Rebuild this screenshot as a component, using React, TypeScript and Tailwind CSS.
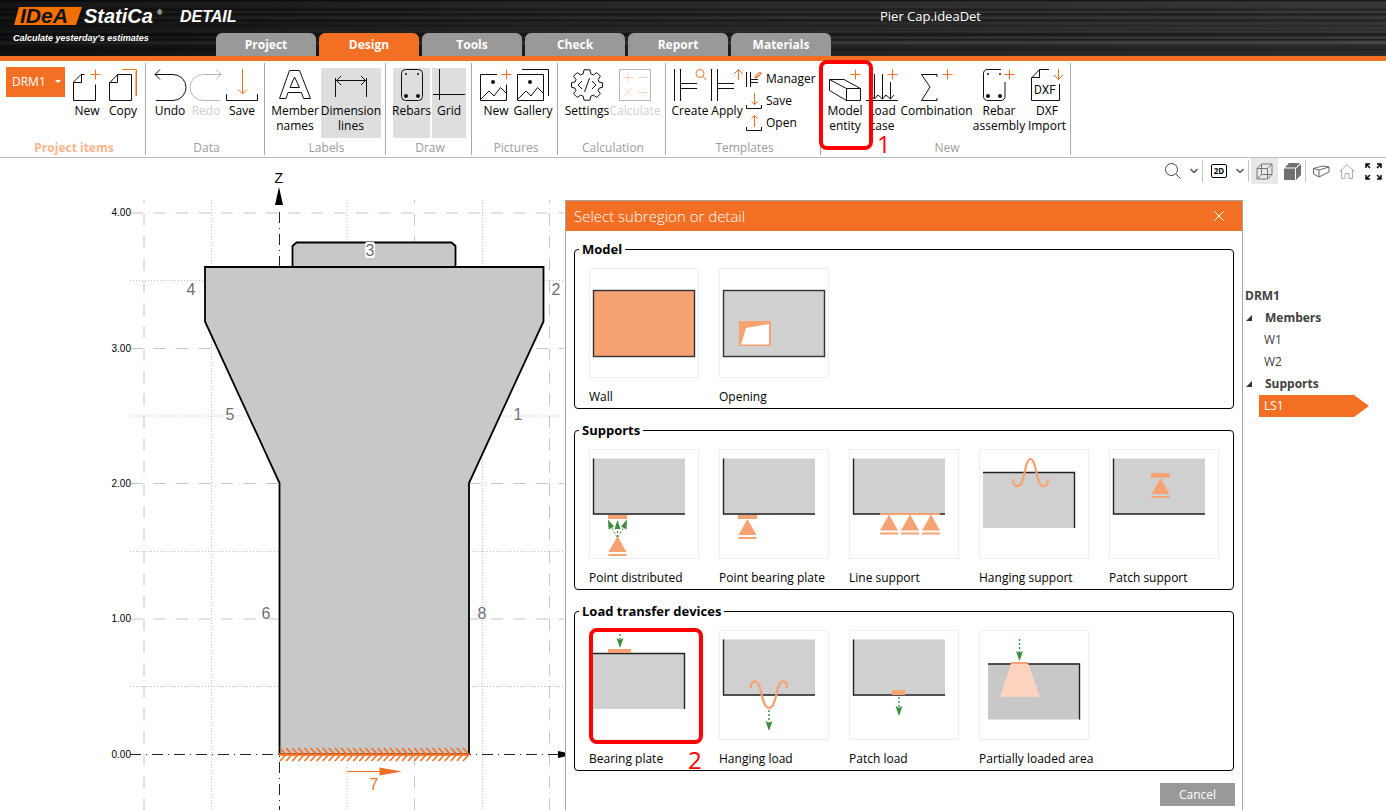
import type { ReactNode } from "react";
import clsx from "clsx";

const ORANGE = "#f36f24";

/* ---------- ribbon icons ---------- */

function Icon({ children, muted }: { children: ReactNode; muted?: boolean }) {
  return (
    <svg
      viewBox="0 0 32 32"
      className={clsx("size-8 shrink-0 overflow-visible", muted && "opacity-30")}
      fill="none"
      stroke="#111"
      aria-hidden="true"
    >
      {children}
    </svg>
  );
}

function Plus({ x, y }: { x: number; y: number }) {
  return <path d={`M${x - 5} ${y}H${x + 5}M${x} ${y - 5}V${y + 5}`} stroke={ORANGE} />;
}

const newIcon = (
  <Icon>
    <path d="M13.5 5.5H10L2.5 13V31.5H24.5V15.5M10.5 5.5V13.5H2.5" />
    <Plus x={24.5} y={5.5} />
  </Icon>
);

const copyIcon = (
  <Icon>
    <path d="M10.5 5.5H24.5V31.5H2.5V14L10.5 5.5V13.5H2.5" />
    <path d="M15 .5H29.5V27" stroke={ORANGE} />
    <path d="M28.500 2V27" stroke="#f7b690" />
  </Icon>
);

const undoIcon = (
  <Icon>
    <path d="M2 31.5H19A13 13 0 0 0 19 5.5H1M6 .5L1 5.5L6 10.5" />
  </Icon>
);

const redoIcon = (
  <Icon muted>
    <path d="M30 31.5H13A13 13 0 0 1 13 5.5H31M26 .5L31 5.5L26 10.5" />
  </Icon>
);

const saveIcon = (
  <Icon>
    <path d="M.5 25V31.5H31.5V25" />
    <path d="M16.5 0V25M12 20.5L16.5 25L21 20.5" stroke={ORANGE} />
  </Icon>
);

const memberIcon = (
  <Icon>
    <path d="M10.5 1.5H20.5L31.5 29.5H24.5L22.5 23.5H9L7 29.5H.5ZM15.5 8L11 18.5H20.5Z" />
  </Icon>
);

const dimensionIcon = (
  <Icon>
    <path d="M.5 9V28M31.5 9V28M1 11.5H31M6 7L1.5 11.5L6 16M26 7L30.5 11.5L26 16" />
  </Icon>
);

const rebarsIcon = (
  <Icon>
    <rect x="5.5" y=".5" width="21" height="31" rx="4" />
    <g fill="#111" stroke="none">
      <circle cx="10" cy="5" r="1" />
      <circle cx="22" cy="5" r="1" />
      <circle cx="10" cy="27" r="2" />
      <circle cx="22" cy="27" r="2" />
    </g>
  </Icon>
);

const gridIcon = (
  <Icon>
    <path d="M6.5 0V31M0 25.5H32" />
  </Icon>
);

const pictureIcon = (
  <Icon>
    <path d="M17 5.5H.5V31.5H26.5V15.5M1 30L9 22L14 27L20.5 18.5L26 24" />
    <circle cx="13" cy="13" r="2" fill="#111" stroke="none" />
    <Plus x={26.5} y={5.5} />
  </Icon>
);

const galleryIcon = (
  <Icon>
    <path d="M.5 5.5H26.5V31.5H.5ZM1 30L9 22L14 27L20.5 18.5L26 24M5 .5H31.5V27" />
    <circle cx="13" cy="13" r="2" fill="#111" stroke="none" />
  </Icon>
);

const settingsIcon = (
  <Icon>
    <path d="M13 .8H19L19.8 4.8L22.4 5.9L25.8 3.6L29.4 7.2L27.1 10.6L28 13L31.5 13.7V18.3L28 19.2L27 21.5L29.4 24.8L25.8 28.4L22.4 26.1L19.8 27.2L19 31.2H13L12.2 27.2L9.6 26.1L6.2 28.4L2.6 24.8L5 21.5L4 19.2L.5 18.3V13.7L4 13L5 10.6L2.6 7.2L6.2 3.6L9.6 5.9L12.2 4.8Z" />
    <path d="M11 12L7 16L11 20M21 12L25 16L21 20M18.5 9L13.5 23" />
  </Icon>
);

const calculateIcon = (
  <Icon muted>
    <rect x=".5" y=".5" width="31" height="31" />
    <path
      d="M4 8.5H14M9 3.5V13.5M19 8.5H29M5 19.500L12.500 27M12.500 19.500L5 27M19 23.500H29M24 19V20.500M24 26.500V28"
      stroke={ORANGE}
    />
  </Icon>
);

const createIcon = (
  <Icon>
    <path d="M.5 0V32M6.500 0V32M6.500 14.500H23M6.500 19.500H23" />
    <circle cx="26" cy="4.500" r="4" stroke={ORANGE} />
    <path d="M29 7.500L32 11" stroke={ORANGE} />
  </Icon>
);

const applyIcon = (
  <Icon>
    <path d="M.5 0V32M6.500 0V32M6.500 14.500H23M6.500 19.500H23" />
    <path d="M27.500 11V.5M23 5L27.500 .5L32 5" stroke={ORANGE} />
  </Icon>
);

const entityIcon = (
  <Icon>
    <path d="M.5 10.500H15L31.500 19.500V31.500H17.500L.5 21.500ZM.5 10.500L17.500 19.500V31.500M17.500 19.500H31.500" />
    <Plus x={26.5} y={5.5} />
  </Icon>
);

const loadIcon = (
  <Icon>
    <path d="M0 31.500H32M8.500 5V30M16.500 5V30M24.500 13V30M5 26L8.500 30L12 26L16.500 30L20 26L24.500 30L28 26" />
    <Plus x={26.5} y={5.5} />
  </Icon>
);

const sigmaIcon = (
  <Icon>
    <path d="M16 8V5.500H.5L9 18L.5 31.500H16V29" />
    <Plus x={26.5} y={5.5} />
  </Icon>
);

const assemblyIcon = (
  <Icon>
    <path d="M18 .5H5A4 4 0 0 0 .5 5V27A4 4 0 0 0 5 31.500H18A4 4 0 0 0 22 27V13" />
    <g fill="#111" stroke="none">
      <circle cx="5" cy="5" r="1" />
      <circle cx="17" cy="5" r="1" />
      <circle cx="5" cy="27" r="2" />
      <circle cx="17" cy="27" r="2" />
    </g>
    <Plus x={26.5} y={5.5} />
  </Icon>
);

const dxfIcon = (
  <Icon>
    <path d="M18 .5H8.500L.5 9V31.500H28.500V15M8.500 .5V8.500H.5" />
    <path d="M27.500 0V10.500M23 6L27.500 10.500L32 6" stroke={ORANGE} />
    <text
      x="14"
      y="25"
      textAnchor="middle"
      fontFamily="Roboto, sans-serif"
      fontSize="12"
      fill="#111"
      stroke="none"
    >
      DXF
    </text>
  </Icon>
);

const managerIcon = (
  <svg viewBox="0 0 16 16" className="size-4 overflow-visible" fill="none" stroke="#111">
    <path d="M.5 1V16M4.500 1V16M4.500 8.500H12M4.500 11.500H12" />
    <path d="M9 7L10 4.500L14 1L15.500 2.500L12 6Z" stroke={ORANGE} fill="#f9b48c" />
  </svg>
);

const smallSaveIcon = (
  <svg viewBox="0 0 16 16" className="size-4 overflow-visible" fill="none" stroke="#111">
    <path d="M.5 12V15.500H15.500V12" />
    <path d="M8.500 0V11.500M5.500 8.500L8.500 11.500L11.500 8.500" stroke={ORANGE} />
  </svg>
);

const smallOpenIcon = (
  <svg viewBox="0 0 16 16" className="size-4 overflow-visible" fill="none" stroke="#111">
    <path d="M.5 12V15.500H15.500V12" />
    <path d="M8.500 12V.5M5.500 3.500L8.500 .5L11.500 3.500" stroke={ORANGE} />
  </svg>
);

/* ---------- ribbon ---------- */

type RibbonButtonProps = {
  icon: ReactNode;
  lines: string[];
  width: string;
  active?: boolean;
  disabled?: boolean;
  step?: string;
};

function RibbonButton({ icon, lines, width, active, disabled, step }: RibbonButtonProps) {
  return (
    <button
      disabled={disabled}
      className={clsx(
        "relative flex h-[70px] shrink-0 flex-col items-center pt-px leading-[15px] whitespace-nowrap",
        width,
        active && "bg-[#dedede]",
        disabled && "text-[#cfcfcf]"
      )}
    >
      {icon}
      <span className="mt-[2px] flex flex-col items-center">
        {lines.map((line) => (
          <span key={line}>{line}</span>
        ))}
      </span>
      {step && (
        <>
          <span className="absolute -top-2 -left-2 z-10 h-[90px] w-[54px] rounded-lg border-4 border-[#fe0000]" />
          <span className="absolute top-[66px] left-[50px] z-10 text-2xl leading-5 font-medium text-[#fe0000]">
            {step}
          </span>
        </>
      )}
    </button>
  );
}

function RibbonGroup({
  title,
  width,
  accent,
  children,
}: {
  title: string;
  width: string;
  accent?: boolean;
  children: ReactNode;
}) {
  return (
    <section
      className={clsx(
        "my-[2px] flex h-[92px] shrink-0 flex-col justify-between border-r border-[#a8a8a8] pt-[5px]",
        width
      )}
    >
      <div className="flex pl-[6px]">{children}</div>
      <h2
        className={clsx(
          "pl-[3px] text-center leading-[14px]",
          accent ? "font-bold text-[#f9b48c]" : "text-[#9c9c9c]"
        )}
      >
        {title}
      </h2>
    </section>
  );
}

function SmallButton({ icon, label }: { icon: ReactNode; label: string }) {
  return (
    <button className="flex h-[22px] items-center gap-1 whitespace-nowrap">
      {icon}
      {label}
    </button>
  );
}

function Ribbon() {
  return (
    <div className="flex overflow-x-clip border-b border-[#bdbdbd] bg-white">
      <RibbonGroup title="Project items" width="w-[146px]" accent>
        <button className="-mt-px mr-1 flex h-[30px] w-[59px] shrink-0 items-center justify-between bg-[#f36f24] pr-1 pl-[6px] text-white">
          DRM1
          <svg viewBox="0 0 6 4" className="h-1 w-[6px]">
            <path d="M0 0H6L3 3Z" fill="white" />
          </svg>
        </button>
        <RibbonButton icon={newIcon} lines={["New"]} width="w-9" />
        <RibbonButton icon={copyIcon} lines={["Copy"]} width="w-9" />
      </RibbonGroup>
      <RibbonGroup title="Data" width="w-[119px]">
        <RibbonButton icon={undoIcon} lines={["Undo"]} width="w-9" />
        <RibbonButton icon={redoIcon} lines={["Redo"]} width="w-9" disabled />
        <RibbonButton icon={saveIcon} lines={["Save"]} width="w-9" />
      </RibbonGroup>
      <RibbonGroup title="Labels" width="w-[121px]">
        <RibbonButton icon={memberIcon} lines={["Member", "names"]} width="mr-[2px] w-12" />
        <RibbonButton icon={dimensionIcon} lines={["Dimension", "lines"]} width="w-[60px]" active />
      </RibbonGroup>
      <RibbonGroup title="Draw" width="w-[86px]">
        <div className="flex gap-[2px] pl-px">
          <RibbonButton icon={rebarsIcon} lines={["Rebars"]} width="w-[37px]" active />
          <RibbonButton icon={gridIcon} lines={["Grid"]} width="w-[34px]" active />
        </div>
      </RibbonGroup>
      <RibbonGroup title="Pictures" width="w-[86px]">
        <RibbonButton icon={pictureIcon} lines={["New"]} width="w-9" />
        <RibbonButton icon={galleryIcon} lines={["Gallery"]} width="w-[38px]" />
      </RibbonGroup>
      <RibbonGroup title="Calculation" width="w-[108px]">
        <RibbonButton icon={settingsIcon} lines={["Settings"]} width="w-[46px]" />
        <RibbonButton icon={calculateIcon} lines={["Calculate"]} width="w-[50px]" disabled />
      </RibbonGroup>
      <RibbonGroup title="Templates" width="w-[155px]">
        <RibbonButton icon={createIcon} lines={["Create"]} width="w-9" />
        <RibbonButton icon={applyIcon} lines={["Apply"]} width="w-[38px]" />
        <div className="flex flex-col">
          <SmallButton icon={managerIcon} label="Manager" />
          <SmallButton icon={smallSaveIcon} label="Save" />
          <SmallButton icon={smallOpenIcon} label="Open" />
        </div>
      </RibbonGroup>
      <RibbonGroup title="New" width="w-[250px]">
        <RibbonButton icon={entityIcon} lines={["Model", "entity"]} width="w-9" step="1" />
        <RibbonButton icon={loadIcon} lines={["Load", "case"]} width="w-[38px]" />
        <RibbonButton icon={sigmaIcon} lines={["Combination"]} width="w-[71px]" />
        <RibbonButton icon={assemblyIcon} lines={["Rebar", "assembly"]} width="w-[54px]" />
        <RibbonButton icon={dxfIcon} lines={["DXF", "Import"]} width="w-[42px]" />
      </RibbonGroup>
    </div>
  );
}

/* ---------- header ---------- */

const tabs = ["Project", "Design", "Tools", "Check", "Report", "Materials"];

function Header() {
  return (
    <header className="flex h-[61px] border-b-[5px] border-[#f36f24] bg-[repeating-linear-gradient(180deg,rgba(0,0,0,.4)_0px,rgba(0,0,0,.1)_1px,rgba(0,0,0,0)_3px,rgba(0,0,0,.4)_5px),repeating-linear-gradient(180deg,rgba(0,0,0,.45)_0px,rgba(0,0,0,.1)_2px,rgba(255,255,255,.04)_5px,rgba(0,0,0,.35)_8px,rgba(0,0,0,0)_13px),repeating-linear-gradient(180deg,rgba(0,0,0,.3)_0px,rgba(0,0,0,0)_7px,rgba(0,0,0,.3)_17px),linear-gradient(90deg,#181818,#303030_35%,#4c4c4c)]">
      <div className="w-[216px] shrink-0">
        <svg viewBox="0 0 250 50" className="h-[50px] w-[250px]" fill="white">
          <g fontFamily="'Liberation Sans', sans-serif" fontStyle="italic" fontWeight="bold">
            <path d="M19 7H82L76 25H14Z" fill="#f36f00" />
            <text x="20" y="23" fontSize="21" fill="#111">
              IDeA
            </text>
            <text x="84" y="23" fontSize="20">
              StatiCa
            </text>
            <text x="157" y="15" fontSize="7">
              ®
            </text>
            <text x="180" y="22" fontSize="16">
              DETAIL
            </text>
            <text x="13" y="41" fontSize="9">
              Calculate yesterday's estimates
            </text>
          </g>
        </svg>
      </div>
      <nav className="flex shrink-0 gap-[3px] self-end">
        {tabs.map((tab) => (
          <button
            key={tab}
            className={clsx(
              "h-[23px] w-[100px] rounded-t-md font-bold text-white",
              tab === "Design" ? "bg-[#f36f24]" : "bg-[#999]"
            )}
          >
            {tab}
          </button>
        ))}
      </nav>
      <h1 className="mt-2 ml-[49px] text-[13px] leading-4 whitespace-nowrap text-white">
        Pier Cap.ideaDet
      </h1>
    </header>
  );
}

/* ---------- drawing of the pier ---------- */

const majorX = [144, 414.5, 549.5];
const minorX = [211.5, 347, 482.5];
const majorY = [
  { y: 213, label: "4.00" },
  { y: 348.5, label: "3.00" },
  { y: 483.5, label: "2.00" },
  { y: 619, label: "1.00" },
];
const minorY = [280.5, 416, 551.5, 686.5];

const edgeLabels = [
  { n: "3", x: 370, y: 256 },
  { n: "4", x: 191, y: 295 },
  { n: "2", x: 556, y: 295 },
  { n: "5", x: 230, y: 420 },
  { n: "1", x: 518, y: 420 },
  { n: "6", x: 266, y: 619 },
  { n: "8", x: 482, y: 619 },
];

const hatch = Array.from({ length: 31 }, (_, i) => 280 + i * 6.1);

function PierDrawing() {
  return (
    <svg
      viewBox="0 158 565 652"
      className="h-[652px] w-[565px] shrink-0"
      fontFamily="'Liberation Sans', sans-serif"
      fill="none"
      role="img"
      aria-label="Pier cap"
    >
      <g stroke="#c4c4c4" strokeDasharray="12 5 .5 5">
        {majorX.map((x) => (
          <path key={x} d={`M${x} 200V810`} strokeDashoffset="9" />
        ))}
        {majorY.map(({ y }) => (
          <path key={y} d={`M131 ${y}H564`} />
        ))}
      </g>
      <g stroke="#bdbdbd" strokeDasharray="1 2">
        {minorX.map((x) => (
          <path key={x} d={`M${x} 200V810`} />
        ))}
        {minorY.map((y) => (
          <path key={y} d={`M130 ${y}H564`} />
        ))}
      </g>
      <path d="M279.500 212V810M130 754.500H558" stroke="#222" strokeDasharray="11 5 1 5" />
      <path d="M279 187L283 205H275ZM558 751L565 752.500V756.500L558 758Z" fill="black" />

      <g fill="#c8c8c8" stroke="black" strokeWidth="1.8">
        <path d="M292.500 267V246L296.500 242.500H451.500L455.500 246V267Z" />
        <path d="M205 267H543.500V321.500L469 483V754H279.500V483L205 321.500Z" />
      </g>

      <g stroke={ORANGE} strokeWidth="1.6">
        {hatch.map((x) => (
          <path key={x} d={`M${x} 748L${x + 6} 754.500L${x} 761`} />
        ))}
        <path d="M279 754.500H469" strokeWidth="2.500" />
        <path d="M347 771.500H382" strokeWidth="1" />
        <path d="M379.500 767.500L402 771.500L379.500 775.500Z" fill={ORANGE} stroke="none" />
      </g>

      <rect x="365" y="242" width="10" height="16" rx="2" fill="white" />
      <g fill="#6f6f6f" stroke="white" strokeWidth="2" paintOrder="stroke" fontSize="16" textAnchor="middle">
        {edgeLabels.map(({ n, x, y }) => (
          <text key={n} x={x} y={y}>
            {n}
          </text>
        ))}
        <text x="374" y="790" fill={ORANGE}>
          7
        </text>
      </g>
      <g fill="black" fontSize="10" textAnchor="end">
        {majorY.map(({ y, label }) => (
          <text key={label} x="131" y={y + 3}>
            {label}
          </text>
        ))}
        <text x="131" y="758">
          0.00
        </text>
        <text x="283" y="183" fontSize="14">
          Z
        </text>
      </g>
    </svg>
  );
}

/* ---------- dialog tiles ---------- */

const CORAL = "#f7a272";

function Arrow({ x, from, to }: { x: number; from: number; to: number }) {
  return (
    <g>
      <path d={`M${x} ${from}V${to - 8}`} stroke="#3d8b3d" strokeDasharray="2 2" strokeWidth="1.400" />
      <path d={`M${x - 3.5} ${to - 10}L${x} ${to - 8}L${x + 3.5} ${to - 10}L${x} ${to}Z`} fill="#3d8b3d" />
    </g>
  );
}

// triangle with the ground bar under it, apex at x, y
function Pin({ x, y }: { x: number; y: number }) {
  return (
    <path
      d={`M${x} ${y}L${x + 9} ${y + 16}H${x - 9}ZM${x - 9} ${y + 18}H${x + 9}V${y + 20}H${x - 9}Z`}
      fill={CORAL}
    />
  );
}

function Slab({ x = 3, y, flip, fill = "#d0d0d0" }: { x?: number; y: number; flip?: boolean; fill?: string }) {
  return (
    <g>
      <rect x={x} y={y} width="92" height="56" fill={fill} />
      {flip ? (
        <path d={`M${x} ${y + 0.5}H${x + 91.5}V${y + 56}`} stroke="#222" strokeWidth="1.4" />
      ) : (
        <path d={`M${x + 0.5} ${y}V${y + 55.5}H${x + 92}`} stroke="#222" strokeWidth="1.4" />
      )}
    </g>
  );
}

type Tile = { name: string; art: ReactNode; step?: string };

const sections: { title: string; tiles: Tile[] }[] = [
  {
    title: "Model",
    tiles: [
      {
        name: "Wall",
        art: <rect x="3.500" y="21.500" width="101" height="66" fill={CORAL} stroke="#333" strokeWidth="1.4" />,
      },
      {
        name: "Opening",
        art: (
          <>
            <rect x="3.500" y="21.500" width="101" height="66" fill="#d0d0d0" stroke="#333" strokeWidth="1.4" />
            <rect x="19" y="52" width="32" height="25" fill={CORAL} />
            <path d="M26 59L49 55V75.500H21Z" fill="white" />
          </>
        ),
      },
    ],
  },
  {
    title: "Supports",
    tiles: [
      {
        name: "Point distributed",
        art: (
          <>
            <Slab y={8.5} />
            <rect x="18" y="65" width="19" height="4" fill={CORAL} />
            <path d="M27.500 87V75M27 87L21 77M28 87L34 77" stroke="#3d8b3d" strokeDasharray="2 2" />
            <path
              d="M27.500 70L30.500 79H24.500ZM18 69.500L24 76.500L18.500 79.500ZM37 69.500L31 76.500L36.500 79.500Z"
              fill="#3d8b3d"
            />
            <Pin x={27.5} y={86} />
          </>
        ),
      },
      {
        name: "Point bearing plate",
        art: (
          <>
            <Slab y={8.5} />
            <rect x="18" y="65" width="19" height="4" fill={CORAL} />
            <Pin x={27.5} y={69} />
          </>
        ),
      },
      {
        name: "Line support",
        art: (
          <>
            <Slab y={8.5} />
            <path d="M30 64H90" stroke={CORAL} strokeWidth="2" />
            <Pin x={39} y={64.5} />
            <Pin x={60} y={64.5} />
            <Pin x={81} y={64.5} />
          </>
        ),
      },
      {
        name: "Hanging support",
        art: (
          <>
            <Slab y={22} flip />
            <path
              d="M33 29C33 38 39 38 42 32C45 24 46 9 50.500 9C55 9 56 24 59 32C62 38 68 38 68 29"
              stroke={CORAL}
              strokeWidth="2.200"
            />
          </>
        ),
      },
      {
        name: "Patch support",
        art: (
          <>
            <Slab y={8.5} />
            <rect x="41" y="23" width="19" height="4.500" fill={CORAL} />
            <Pin x={50.5} y={28} />
          </>
        ),
      },
    ],
  },
  {
    title: "Load transfer devices",
    tiles: [
      {
        name: "Bearing plate",
        step: "2",
        art: (
          <>
            <Slab y={22} flip />
            <rect x="18" y="18" width="23" height="4" fill={CORAL} />
            <Arrow x={30} from={3} to={17} />
          </>
        ),
      },
      {
        name: "Hanging load",
        art: (
          <>
            <Slab y={8.5} />
            <path
              d="M31 57C30 50 36 48 39 54C42 62 43 77 49 77C55 77 56 62 59 54C62 48 68 50 66.500 57"
              stroke={CORAL}
              strokeWidth="2.200"
            />
            <Arrow x={49} from={79} to={100} />
          </>
        ),
      },
      {
        name: "Patch load",
        art: (
          <>
            <Slab y={8.5} />
            <rect x="42" y="59" width="13" height="5" fill={CORAL} />
            <Arrow x={49} from={66} to={85} />
          </>
        ),
      },
      {
        name: "Partially loaded area",
        art: (
          <>
            <Slab x={8} y={32.5} flip fill="#c8c8c8" />
            <path d="M31 32H48L60 66H20Z" fill="#fbd3be" />
            <path d="M31 32H48" stroke={CORAL} strokeWidth="2" />
            <Arrow x={39.5} from={8} to={30} />
          </>
        ),
      },
    ],
  },
];

function TileButton({ name, art, step }: Tile) {
  return (
    <button className="relative flex w-[110px] flex-col items-start gap-[11px] text-left leading-4 whitespace-nowrap">
      <span className="block h-[110px] w-[110px] border border-[#efefef]">
        <svg viewBox="0 0 108 108" className="size-[108px]" fill="none">
          {art}
        </svg>
      </span>
      {name}
      {step && (
        <>
          <span className="absolute -top-[2px] left-0 h-[116px] w-[114px] rounded-lg border-4 border-[#fe0000]" />
          <span className="absolute top-[118px] left-[99px] text-2xl leading-6 font-medium text-[#fe0000]">{step}</span>
        </>
      )}
    </button>
  );
}

function SelectDialog() {
  return (
    <div
      role="dialog"
      aria-label="Select subregion or detail"
      className="flex w-[678px] shrink-0 flex-col border border-b-0 border-[#a3a3a3] bg-white"
    >
      <div className="flex h-[30px] items-center justify-between bg-[#f36f24] pr-[17px] pl-2 text-white">
        <h2 className="text-[15px] leading-5 font-light">Select subregion or detail</h2>
        <button aria-label="Close">
          <svg viewBox="0 0 12 12" className="size-3" stroke="white">
            <path d="M1 1L11 11M11 1L1 11" />
          </svg>
        </button>
      </div>
      <div className="flex flex-col gap-[13px] px-2 pt-[10px]">
        {sections.map(({ title, tiles }) => (
          <fieldset key={title} className="h-[168px] rounded-[4px] border border-black pl-[14px]">
            <legend className="-ml-[10px] px-[3px] text-[13px] leading-4 font-bold">{title}</legend>
            <div className="flex gap-5 pt-[11px]">
              {tiles.map((tile) => (
                <TileButton key={tile.name} {...tile} />
              ))}
            </div>
          </fieldset>
        ))}
      </div>
      <button className="mt-3 mr-[7px] h-[23px] w-[75px] self-end bg-[#999] text-white">Cancel</button>
    </div>
  );
}

/* ---------- right side ---------- */

function Chevron() {
  return (
    <svg viewBox="0 0 8 6" className="h-[6px] w-2" fill="none" stroke="#555" strokeWidth="1.500">
      <path d="M.5 1L4 4.500L7.500 1" />
    </svg>
  );
}

function Separator() {
  return <span className="h-[22px] w-px bg-[#c4c4c4]" />;
}

function ViewToolbar() {
  return (
    <div className="flex h-[26px] items-center justify-end pr-1">
      <button aria-label="Zoom" className="mr-[9px]">
        <svg viewBox="0 0 16 16" className="size-4" fill="none" stroke="#444">
          <circle cx="6.500" cy="6.500" r="6" />
          <path d="M11 11L15.500 15.500" />
        </svg>
      </button>
      <button aria-label="Zoom options" className="mr-1">
        <Chevron />
      </button>
      <Separator />
      <button
        aria-label="2D view"
        className="mx-2 flex h-[14px] w-4 items-center justify-center rounded-[2px] border border-black text-[8px] leading-none font-bold"
      >
        2D
      </button>
      <button aria-label="View options" className="mr-1 ml-px">
        <Chevron />
      </button>
      <Separator />
      <button aria-label="Wireframe" className="ml-[2px] flex h-[26px] w-[27px] items-center justify-center bg-[#e8e8e8]">
        <svg viewBox="0 0 17 17" className="size-[17px]" fill="none" stroke="#777">
          <path d="M1 5.500H11.500V16H1ZM1 5.500L5.500 1H16L11.500 5.500M16 1V11.500L11.500 16M5.500 1V11.500H16M5.500 11.500L1 16" />
        </svg>
      </button>
      <button aria-label="Solid" className="ml-[6px]">
        <svg viewBox="0 0 17 17" className="size-[17px]" fill="#6f6f6f">
          <path d="M0 5.500H11V17H0ZM1 4.500L5 0H16L12 4.500ZM12 5.500L17 1V12L12 17Z" />
        </svg>
      </button>
      <span className="ml-[4px] flex">
        <Separator />
      </span>
      <button aria-label="Perspective" className="ml-[7px]">
        <svg viewBox="0 0 17 13" className="h-[13px] w-[17px]" fill="none" stroke="#666">
          <path d="M.5 3.500L9.500 1L16 2L6 5ZM.5 3.500V9L6 12V5M6 12L16 7V2" />
        </svg>
      </button>
      <button aria-label="Home" className="ml-[9px]">
        <svg viewBox="0 0 16 15" className="h-[15px] w-4" fill="none" stroke="#aaa">
          <path d="M.5 7.500L8 .8L15.500 7.500M2.500 6V14.500H6V9.500H10V14.500H13.500V6" />
        </svg>
      </button>
      <button aria-label="Full screen" className="ml-[10px]">
        <svg viewBox="0 0 17 17" className="size-[17px]" fill="none" stroke="black" strokeWidth="1.400">
          <path d="M1 5V1H5M1 1L5 5M12 1H16V5M16 1L12 5M1 12V16H5M1 16L5 12M16 12V16H12M16 16L12 12" />
        </svg>
      </button>
    </div>
  );
}

function TreeHeading({ children }: { children: ReactNode }) {
  return (
    <button className="flex h-[22px] items-center gap-[13px] pl-px font-bold">
      <svg viewBox="0 0 6 6" className="size-[6px]" fill="#333">
        <path d="M6 0V6H0Z" />
      </svg>
      {children}
    </button>
  );
}

function ModelTree() {
  return (
    <aside className="flex w-[143px] shrink-0 flex-col items-start pt-[85px] pl-[2px] text-[#404040]">
      <button className="h-[22px] font-bold">DRM1</button>
      <TreeHeading>Members</TreeHeading>
      <button className="h-[22px] pl-[19px]">W1</button>
      <button className="h-[22px] pl-[19px]">W2</button>
      <TreeHeading>Supports</TreeHeading>
      <button className="ml-[14px] h-[22px] w-[110px] bg-[#f36f24] pl-[5px] text-left text-white [clip-path:polygon(0_0,95px_0,100%_50%,95px_100%,0_100%)]">
        LS1
      </button>
    </aside>
  );
}

export default function App() {
  return (
    <div className="flex min-h-screen flex-col bg-white font-['Open_Sans','Noto_Sans',sans-serif] text-[12px] text-black">
      <Header />
      <Ribbon />
      <main className="flex flex-1 overflow-x-clip">
        <div className="flex flex-1 justify-end">
          <PierDrawing />
        </div>
        <div className="flex shrink-0 flex-col">
          <ViewToolbar />
          <div className="flex flex-1 pt-4">
            <SelectDialog />
            <ModelTree />
          </div>
        </div>
      </main>
    </div>
  );
}
